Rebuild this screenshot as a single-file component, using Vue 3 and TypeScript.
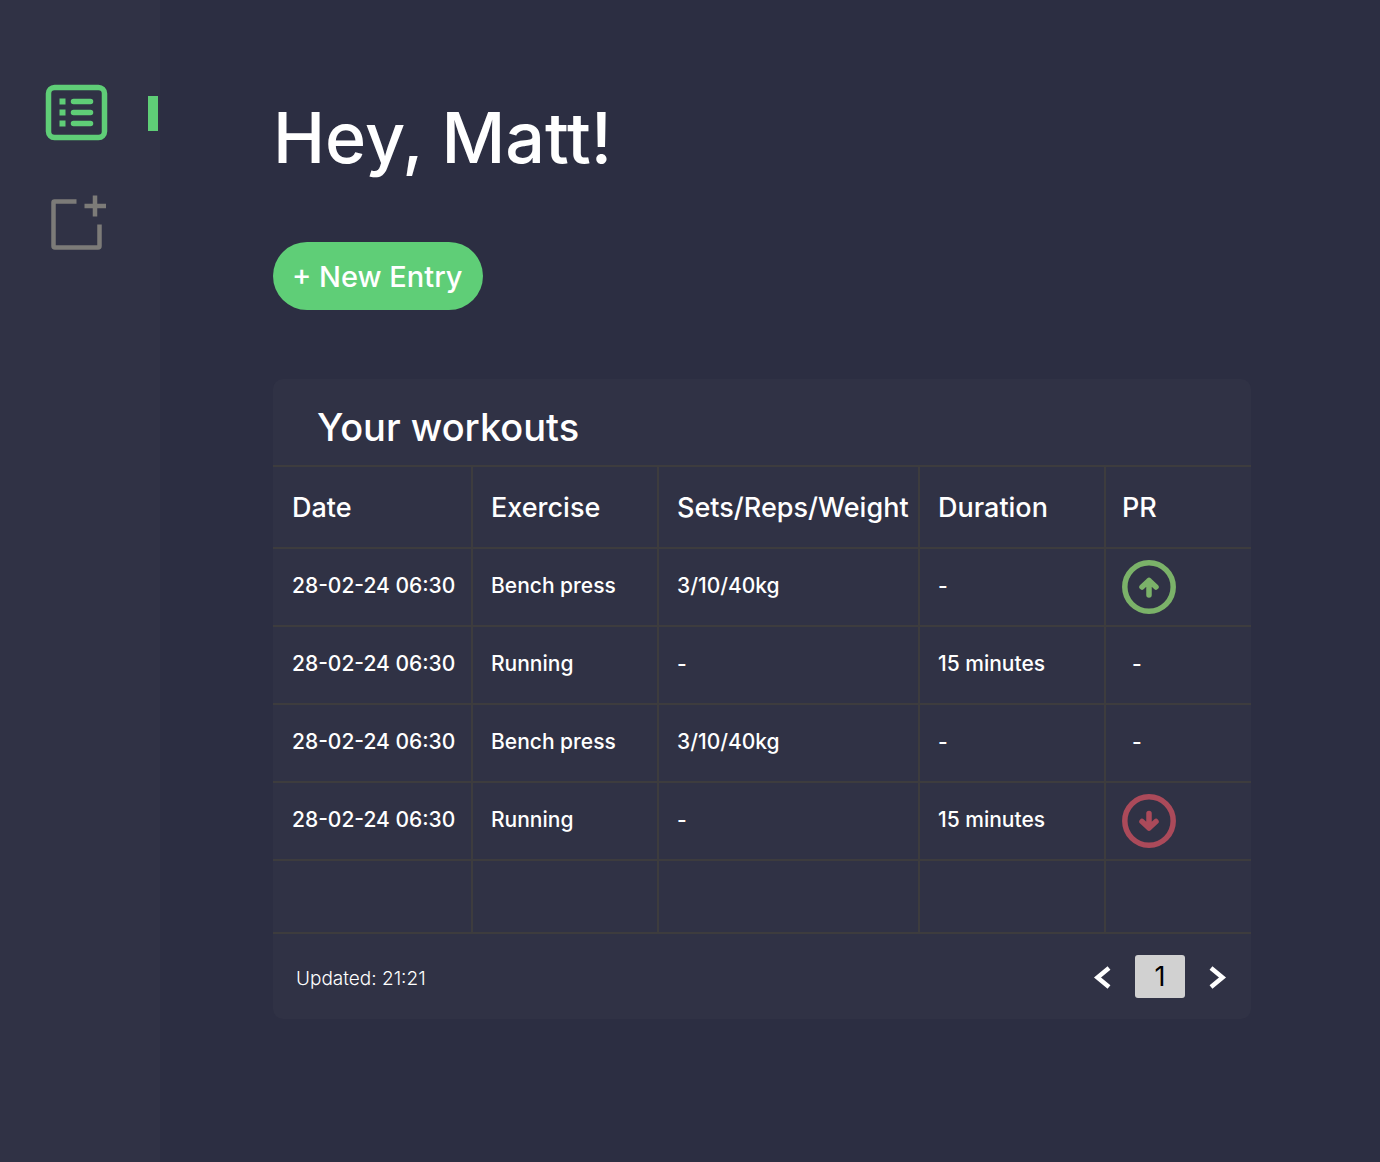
<script setup lang="ts">
import { ref } from 'vue'

type Trend = 'up' | 'down' | 'none' | 'empty'

interface Workout {
  date: string
  exercise: string
  sets: string
  duration: string
  pr: Trend
}

const workouts = ref<Workout[]>([
  { date: '28-02-24 06:30', exercise: 'Bench press', sets: '3/10/40kg', duration: '-', pr: 'up' },
  { date: '28-02-24 06:30', exercise: 'Running', sets: '-', duration: '15 minutes', pr: 'none' },
  { date: '28-02-24 06:30', exercise: 'Bench press', sets: '3/10/40kg', duration: '-', pr: 'none' },
  { date: '28-02-24 06:30', exercise: 'Running', sets: '-', duration: '15 minutes', pr: 'down' },
  { date: '', exercise: '', sets: '', duration: '', pr: 'empty' },
])
const page = ref(1)
</script>

<template>
  <div class="app">
    <nav class="sidebar" aria-label="Main">
      <a href="#workouts" class="nav-link active" aria-label="Workouts" aria-current="page">
        <svg width="63" height="57" viewBox="0 0 63 57" fill="none" aria-hidden="true">
          <rect x="3.5" y="3.5" width="56" height="50" rx="6" stroke="currentColor" stroke-width="5.5" />
          <path d="M14.500 14.500h6v6h-6zM14.500 25.500h6v6h-6zM14.500 36.500h6v6h-6z" fill="currentColor" />
          <path d="M28.500 17.500h17M28.500 28.500h17M28.500 39.500h17" stroke="currentColor" stroke-width="5.5" stroke-linecap="round" />
        </svg>
      </a>
      <a href="#new" class="nav-link" aria-label="Add entry">
        <svg width="63" height="57" viewBox="0 0 63 57" fill="none" aria-hidden="true">
          <path d="M31.500 6.500H9.500Q8.500 6.500 8.500 7.500v43.500q0 1.500 1.500 1.500h43q1.500 0 1.500-1.500V29.500" stroke="currentColor" stroke-width="4.5" />
          <path d="M50 .5v21M39.500 11h21.500" stroke="currentColor" stroke-width="4.5" />
        </svg>
      </a>
    </nav>

    <main class="content">
      <h1>Hey, Matt!</h1>
      <button type="button" class="new-entry">+ New Entry</button>

      <section id="workouts" class="panel" aria-labelledby="workouts-title">
        <h2 id="workouts-title">Your workouts</h2>
        <table>
          <colgroup>
            <col class="col-date" />
            <col class="col-mid" />
            <col class="col-sets" />
            <col class="col-mid" />
            <col class="col-pr" />
          </colgroup>
          <thead>
            <tr>
              <th scope="col">Date</th>
              <th scope="col">Exercise</th>
              <th scope="col">Sets/Reps/Weight</th>
              <th scope="col">Duration</th>
              <th scope="col">PR</th>
            </tr>
          </thead>
          <tbody>
            <tr v-for="(w, i) in workouts" :key="i" :class="{ spare: w.pr === 'empty' }">
              <td>{{ w.date }}</td>
              <td>{{ w.exercise }}</td>
              <td>{{ w.sets }}</td>
              <td>{{ w.duration }}</td>
              <td :class="{ badge: w.pr === 'up' || w.pr === 'down' }">
                <svg
                  v-if="w.pr === 'up' || w.pr === 'down'"
                  :class="w.pr"
                  width="54"
                  height="54"
                  viewBox="0 0 54 54"
                  fill="none"
                  stroke="currentColor"
                  stroke-width="5.5"
                  role="img"
                  :aria-label="w.pr === 'up' ? 'Improved' : 'Declined'"
                >
                  <circle cx="27" cy="27" r="24.2" />
                  <path
                    v-if="w.pr === 'up'"
                    d="M27 35V20.500M20 27l7-6.500 7 6.500"
                    stroke-linecap="round"
                    stroke-linejoin="round"
                  />
                  <path
                    v-else
                    d="M27 19.500V34M20 27.500l7 6.500 7-6.500"
                    stroke-linecap="round"
                    stroke-linejoin="round"
                  />
                </svg>
                <span v-else-if="w.pr === 'none'" class="none">-</span>
              </td>
            </tr>
          </tbody>
        </table>
        <footer>
          <p>Updated: 21:21</p>
          <div class="pager">
            <button type="button" aria-label="Previous page">
              <svg width="18" height="24" viewBox="0 0 18 24" fill="none" aria-hidden="true">
                <path d="M16 3L4.500 12.500L16 22" stroke="currentColor" stroke-width="4.5" />
              </svg>
            </button>
            <button type="button" class="current" aria-current="page">{{ page }}</button>
            <button type="button" aria-label="Next page">
              <svg width="18" height="24" viewBox="0 0 18 24" fill="none" aria-hidden="true">
                <path d="M2 3L13.500 12.500L2 22" stroke="currentColor" stroke-width="4.5" />
              </svg>
            </button>
          </div>
        </footer>
      </section>
    </main>
  </div>
</template>

<style>
body {
  margin: 0;
  background: #2c2e42;
}
</style>

<style scoped>
.app {
  display: flex;
  min-height: 100vh;
  font-family: Inter, 'Liberation Sans', sans-serif;
  color: #fff;
  background: #2c2e42;
}

.sidebar {
  display: flex;
  flex-direction: column;
  flex: 0 0 160px;
  gap: 54px;
  box-sizing: border-box;
  padding-top: 84px;
  background: #303245;
}

.nav-link {
  display: flex;
  align-items: center;
  justify-content: space-between;
  padding: 0 2px 0 45px;
  color: #7c7b78;
}

.nav-link.active {
  color: #5fce77;
}

.nav-link.active::after {
  content: '';
  width: 10px;
  height: 35px;
  margin-top: 2px;
  background: currentColor;
}

.content {
  flex: 1;
  min-width: 0;
  padding: 94px 129px 80px 113px;
}

h1 {
  margin: 0 0 60px;
  font-size: 70px;
  font-weight: 500;
  line-height: 88px;
}

button {
  padding: 0;
  border: 0;
  font-family: inherit;
  color: inherit;
  background: none;
  cursor: pointer;
}

.new-entry {
  display: block;
  height: 68px;
  padding: 0 20px 0 19px;
  border-radius: 34px;
  font-size: 29px;
  font-weight: 500;
  background: #5fce77;
}

.panel {
  margin-top: 69px;
  border-radius: 10px;
  background: #303245;
}

h2 {
  margin: 0;
  padding: 24px 44px 14px;
  font-size: 38px;
  font-weight: 500;
  line-height: 48px;
}

table {
  width: 100%;
  table-layout: fixed;
  border-spacing: 0;
  border-bottom: 2px solid #3d3c3e;
}

.col-date {
  width: 200px;
}

.col-mid {
  width: 186px;
}

.col-sets {
  width: 261px;
}

.col-pr {
  width: 145px;
}

th,
td {
  box-sizing: border-box;
  height: 78px;
  padding: 0 0 4px 18px;
  border-top: 2px solid #3d3c3e;
  border-right: 2px solid #3d3c3e;
  font-size: 21px;
  font-weight: 500;
  text-align: left;
  white-space: nowrap;
}

th {
  height: 82px;
  padding-bottom: 0;
  font-size: 27px;
}

th:first-child,
td:first-child {
  padding-left: 19px;
}

th:last-child,
td:last-child {
  padding-left: 16px;
  border-right: 0;
}

.spare td {
  height: 73px;
}

td svg {
  display: block;
}

.badge {
  padding-bottom: 0;
}

.none {
  padding-left: 10px;
}

.up {
  color: #7bb269;
}

.down {
  color: #ab4a5a;
}

footer {
  display: flex;
  align-items: center;
  justify-content: space-between;
  height: 85px;
  padding: 0 24px 0 23px;
}

footer p {
  margin: 4px 0 0;
  font-size: 19px;
  font-weight: 300;
}

.pager {
  display: flex;
  align-items: center;
  gap: 24px;
}

.pager svg {
  display: block;
}

.current {
  width: 50px;
  height: 43px;
  border-radius: 3px;
  font-size: 27px;
  color: #000;
  background: #d1d1d1;
}
</style>
